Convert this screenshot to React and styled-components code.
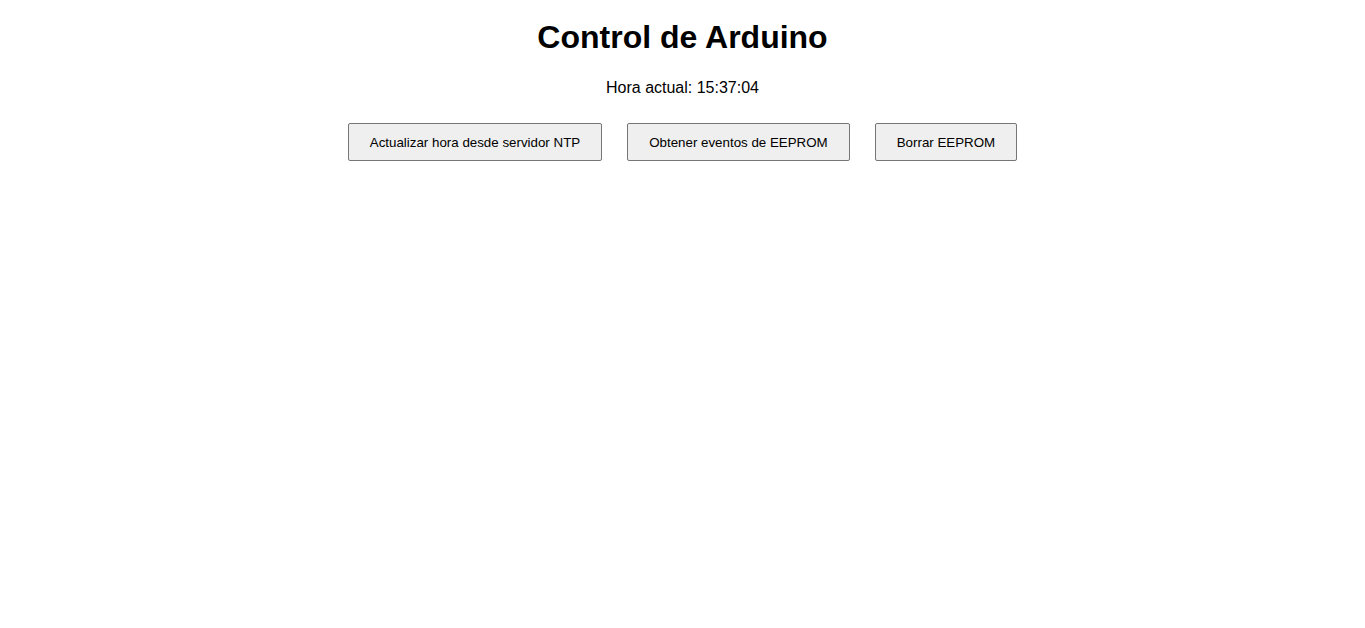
import React, { useState } from "react";
import styled, { createGlobalStyle } from "styled-components";

const GlobalStyle = createGlobalStyle`
  body {
    margin: 0;
    background: #ffffff;
    font-family: "Liberation Sans", Arial, sans-serif;
    color: #000000;
  }
`;

const Page = styled.div`
  display: flex;
  flex-direction: column;
  align-items: center;
  padding-top: 19px;
  text-align: center;
`;

const Title = styled.h1`
  margin: 0;
  font-size: 32px;
  font-weight: bold;
  line-height: 37px;
`;

const Clock = styled.p`
  margin: 23px 0 0;
  font-size: 16px;
  line-height: 18px;
`;

const Toolbar = styled.div`
  display: flex;
  gap: 25px;
  margin-top: 26px;
`;

const Button = styled.button`
  font-family: "Liberation Sans", Arial, sans-serif;
  font-size: 13.33px;
  color: #000000;
  background: #efefef;
  border: 1px solid #767676;
  border-radius: 2px;
  padding: 10px 21px;
  height: 38px;
  cursor: pointer;
`;

export default function App() {
  const [time] = useState("15:37:04");
  return (
    <>
      <GlobalStyle />
      <Page>
        <Title>Control de Arduino</Title>
        <Clock>Hora actual: {time}</Clock>
        <Toolbar>
          <Button>Actualizar hora desde servidor NTP</Button>
          <Button>Obtener eventos de EEPROM</Button>
          <Button>Borrar EEPROM</Button>
        </Toolbar>
      </Page>
    </>
  );
}
